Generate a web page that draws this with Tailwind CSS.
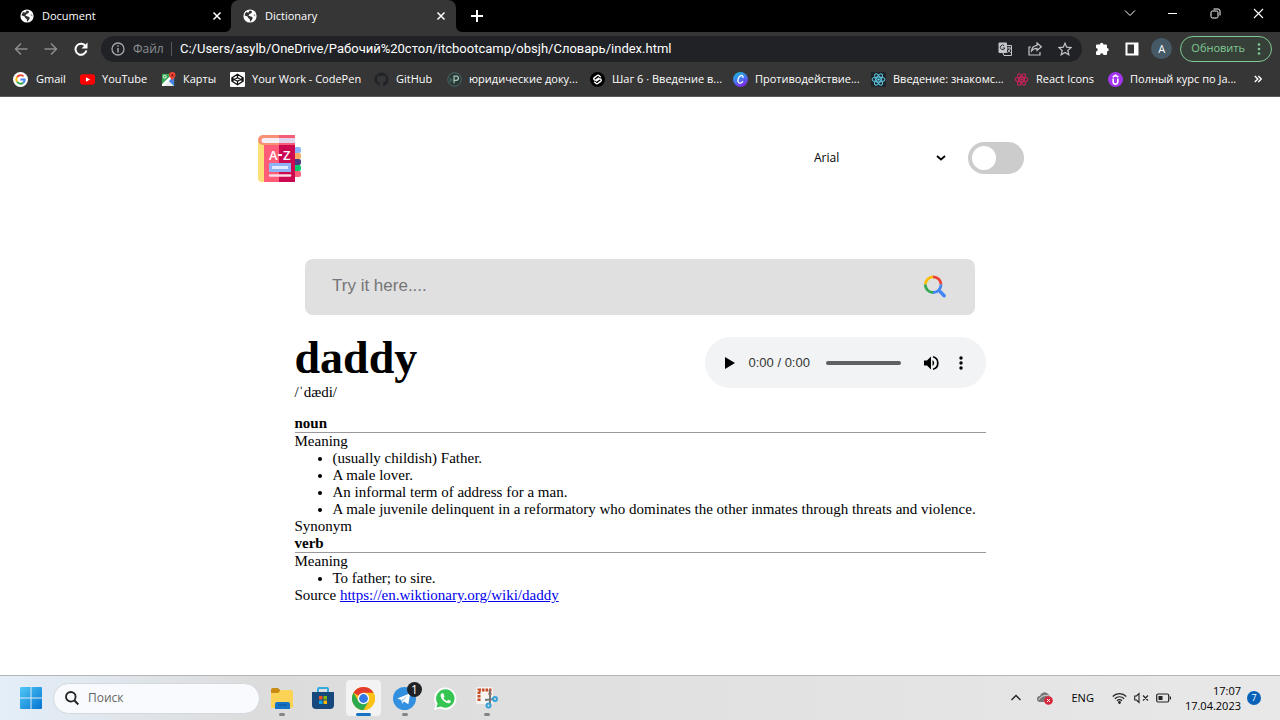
<!DOCTYPE html>
<html lang="ru">

<head>
    <meta charset="UTF-8">
    <meta name="viewport" content="width=device-width, initial-scale=1.0">
    <title>Dictionary</title>
    <script src="https://cdn.jsdelivr.net/npm/@tailwindcss/browser@4"></script>
</head>

<body class="min-h-screen flex flex-col bg-white text-black font-['Open_Sans','Noto_Sans',sans-serif]">
    <svg class="hidden">
        <symbol id="globe" viewBox="0 0 14 14">
            <circle cx="7" cy="7" r="6.6" fill="#fff" />
            <path d="M6.8 1.6 9 2.2 8.6 4 6.6 5 5.4 6.4 7 7.2 9.4 8 9.6 9.8 7.6 12.6 7 12.6 6.8 10.2 5 8.8 4.6 7.6 1.6 6.4 2.4 4 4 2.8 5 4Z" fill="#333" />
            <path d="M10.4 5.4 12.2 5.2 12.4 7.6 11 7Z" fill="#999" />
        </symbol>
        <symbol id="react" viewBox="0 0 16 16">
            <g fill="none" stroke="currentColor" stroke-width="1.1">
                <ellipse cx="8" cy="8" rx="6.8" ry="2.6" />
                <ellipse cx="8" cy="8" rx="6.8" ry="2.6" transform="rotate(60 8 8)" />
                <ellipse cx="8" cy="8" rx="6.8" ry="2.6" transform="rotate(120 8 8)" />
            </g>
            <circle cx="8" cy="8" r="1.4" fill="currentColor" />
        </symbol>
        <symbol id="cross" viewBox="0 0 10 10">
            <path d="m1.5 1.5 7 7m0-7-7 7" fill="none" stroke="currentColor" stroke-width="1.5" />
        </symbol>
        <symbol id="flare" viewBox="0 0 6 6">
            <path d="M6 0v6H0a6 6 0 0 0 6-6Z" fill="#363636" />
        </symbol>
    </svg>

    <!-- Browser -->
    <header class="text-white">
        <!-- Tabs -->
        <div class="flex h-8 bg-black text-[11px]">
            <div class="w-[231px] flex items-center gap-2 pl-5 pr-2">
                <svg class="size-[14px]"><use href="#globe" /></svg>
                <span class="flex-1">Document</span>
                <button aria-label="Close Document" class="p-px"><svg class="size-[10px]"><use href="#cross" /></svg></button>
            </div>
            <div class="relative w-[225px] flex items-center gap-2 pl-3 pr-[9px] bg-[#363636] rounded-t-lg">
                <svg class="absolute bottom-0 -left-[6px] size-[6px]"><use href="#flare" /></svg>
                <svg class="absolute bottom-0 -right-[6px] size-[6px] -scale-x-100"><use href="#flare" /></svg>
                <svg class="size-[14px]"><use href="#globe" /></svg>
                <span class="flex-1">Dictionary</span>
                <button aria-label="Close Dictionary" class="p-px"><svg class="size-[10px]"><use href="#cross" /></svg></button>
            </div>
            <button aria-label="New tab" class="ml-[15px]">
                <svg class="size-3" viewBox="0 0 12 12"><path d="M6 0v12M0 6h12" stroke="#fff" stroke-width="2" /></svg>
            </button>
            <div class="ml-auto flex gap-8 pr-4 pb-[6px]">
                <button aria-label="Search tabs"><svg class="size-3" viewBox="0 0 12 12"><path d="m1 3.500 5 5 5-5" fill="none" stroke="#fff" /></svg></button>
                <button aria-label="Minimize"><svg class="size-[10px]" viewBox="0 0 10 10"><path d="M0 5.500h9" stroke="#fff" /></svg></button>
                <button aria-label="Restore"><svg class="size-[11px]" viewBox="0 0 11 11" fill="none" stroke="#fff"><rect x="1" y="3" width="7" height="7" rx="1.500" /><path d="M3.500 1H8a2 2 0 0 1 2 2v4.500" /></svg></button>
                <button aria-label="Close"><svg class="size-[11px]" viewBox="0 0 11 11"><path d="m1 1 9 9m0-9-9 9" stroke="#fff" stroke-width="1.100" /></svg></button>
            </div>
        </div>

        <!-- Toolbar -->
        <div class="flex items-center h-[33px] bg-[#363636] pl-[14px] pr-2">
            <div class="flex gap-4 w-[87px]">
                <button aria-label="Back"><svg class="size-[14px]" viewBox="0 0 14 14"><path d="M13.500 7H1.500M7 1.500 1.500 7 7 12.500" fill="none" stroke="#8d8d8d" stroke-width="1.500" /></svg></button>
                <button aria-label="Forward"><svg class="size-[14px]" viewBox="0 0 14 14"><path d="M.5 7h12M7 1.500 12.500 7 7 12.500" fill="none" stroke="#8d8d8d" stroke-width="1.500" /></svg></button>
                <button aria-label="Reload"><svg class="size-[14px]" viewBox="0 0 14 14"><path d="M11.800 4.500A5.500 5.500 0 1 0 12.400 8.500" fill="none" stroke="#fff" stroke-width="2" /><path d="M13.500.5v6h-6Z" fill="#fff" /></svg></button>
            </div>
            <div class="flex-1 flex items-center h-[26px] rounded-full bg-[#202226] pl-[10px] pr-[10px] text-xs">
                <svg class="size-[14px]" viewBox="0 0 14 14"><circle cx="7" cy="7" r="6" fill="none" stroke="#a5a8ab" stroke-width="1.300" /><path d="M7 6v4.500M7 3.300v1.500" stroke="#a5a8ab" stroke-width="1.500" /></svg>
                <span class="ml-2 w-[38px] text-[#8d9094]">Файл</span>
                <span class="h-[14px] w-px bg-[#55585c]"></span>
                <input type="text" aria-label="Address" class="flex-1 ml-2 font-['Roboto',sans-serif] text-[13px] outline-none" value="C:/Users/asylb/OneDrive/Рабочий%20стол/itcbootcamp/obsjh/Словарь/index.html">
                <div class="flex gap-4">
                    <button aria-label="Translate">
                        <svg class="size-[14px]" viewBox="0 0 14 14"><rect x=".5" y=".5" width="8.500" height="10.500" rx="1" fill="#c4c7c9" /><path d="M9 3.500h4.500v10H6l-1-2.500" fill="none" stroke="#c4c7c9" /><path d="M6.300 3.800A2.300 2.300 0 1 0 6.800 6H4.800" fill="none" stroke="#333" /><path d="M9 6h4M11 4.700V6M12.300 6q-.5 3-3 4.500M9.700 7.500l3 3.500" fill="none" stroke="#c4c7c9" stroke-width=".9" /></svg>
                    </button>
                    <button aria-label="Share">
                        <svg class="size-[14px]" viewBox="0 0 14 14" fill="none" stroke="#c4c7c9" stroke-width="1.200"><path d="M3 5H1v8h11v-3M9 1l4.300 3.800L9 8.500V6.300Q5.500 6.300 3.500 9 4 4 9 3.400Z" /></svg>
                    </button>
                    <button aria-label="Bookmark">
                        <svg class="size-[14px]" viewBox="0 0 14 14"><path d="m7 1.200 1.700 4 4.400.4-3.300 2.900 1 4.300L7 10.500l-3.800 2.300 1-4.300L.9 5.600l4.400-.4Z" fill="none" stroke="#c4c7c9" stroke-width="1.200" /></svg>
                    </button>
                </div>
            </div>
            <div class="flex items-center gap-4 ml-[13px]">
                <button aria-label="Extensions">
                    <svg class="size-[14px]" viewBox="0 0 14 14"><path d="M5 2.500a1.700 1.700 0 0 1 3.400 0H11a1 1 0 0 1 1 1V6a1.700 1.700 0 0 1 0 3.500V12a1 1 0 0 1-1 1H8.500a1.700 1.700 0 0 0-3.400 0H2a1 1 0 0 1-1-1V9.500a1.700 1.700 0 0 0 0-3.400V3.500a1 1 0 0 1 1-1Z" fill="#fff" /></svg>
                </button>
                <button aria-label="Side panel">
                    <svg class="size-[14px]" viewBox="0 0 14 14"><path d="M.5 .5h13v13H.5Zm2 2v9h6.500v-9Z" fill="#fff" fill-rule="evenodd" /></svg>
                </button>
                <button aria-label="Profile" class="-ml-1 size-[21px] rounded-full bg-[#455a66] text-[11px] leading-[21px]">A</button>
            </div>
            <button class="ml-2 flex items-center gap-3 h-[26px] rounded-full border border-[#81c995] bg-[#364039] pl-[10px] pr-[10px] text-[11px] text-[#81c995]">
                Обновить
                <svg class="w-1 h-3" viewBox="0 0 4 12" fill="#81c995"><circle cx="2" cy="1.500" r="1.300" /><circle cx="2" cy="6" r="1.300" /><circle cx="2" cy="10.500" r="1.300" /></svg>
            </button>
        </div>

        <!-- Bookmarks -->
        <nav class="grid grid-cols-[67px_81px_69px_144px_73px_143px_143px_138px_143px_94px_1fr_auto] items-center h-8 bg-[#363636] border-b border-[#5a5a5a] pl-[13px] pr-[18px] pb-[3px] text-[11px] whitespace-nowrap">
            <a href="#" class="flex items-center gap-2">
                <svg class="size-[15px]" viewBox="0 0 16 16"><circle cx="8" cy="8" r="8" fill="#fff" /><g fill="none" stroke-width="2"><path d="M4.300 5.500A4.500 4.500 0 0 1 11.300 4.700" stroke="#ea4335" /><path d="M4.300 10.500a4.500 4.500 0 0 1 0-5" stroke="#fbbc05" /><path d="M11 11.400a4.500 4.500 0 0 1-6.700-.9" stroke="#34a853" /><path d="M8 8h4.500a4.500 4.500 0 0 1-1.500 3.400" stroke="#4285f4" /></g></svg>
                Gmail
            </a>
            <a href="#" class="flex items-center gap-[7px]">
                <svg class="size-[15px]" viewBox="0 0 16 16"><rect y="2.500" width="16" height="11" rx="3" fill="#f00" /><path d="m6.300 5.500 4.500 2.500-4.500 2.500Z" fill="#fff" /></svg>
                YouTube
            </a>
            <a href="#" class="flex items-center gap-[7px]">
                <svg class="size-[15px]" viewBox="0 0 16 16"><path d="M1 2h13v13H1Z" fill="#34a853" /><path d="m1 15 6.500-6.500L14 15Z" fill="#e8eaed" /><path d="M7.500 8.500 14 2v13Z" fill="#4285f4" /><path d="m1 13 11-11h2v2L3 15H1Z" fill="#fff" /><circle cx="4" cy="5" r="1.500" fill="none" stroke="#fff" /><path d="M12 0a3.500 3.500 0 0 1 3.500 3.500C15.500 6 12.500 6.500 12 10c-.5-3.500-3.500-4-3.500-6.500A3.500 3.500 0 0 1 12 0Z" fill="#ea4335" /><circle cx="12" cy="3.500" r="1.200" fill="#811411" /></svg>
                Карты
            </a>
            <a href="#" class="flex items-center gap-[7px]">
                <svg class="size-[15px]" viewBox="0 0 16 16"><rect width="16" height="16" rx="1" fill="#fff" /><path d="m8 2.500 6 3.800v3.400l-6 3.800-6-3.800V6.300ZM8 2.500v3.800m0 3.400v3.800M2 6.300l6 3.700 6-3.700M2 9.700 8 6l6 3.700" fill="none" stroke="#111" stroke-width="1.300" /></svg>
                Your Work - CodePen
            </a>
            <a href="#" class="flex items-center gap-[7px]">
                <svg class="size-[15px]" viewBox="0 0 16 16"><path fill="#202327" d="M8 .5a7.500 7.500 0 0 0-2.400 14.600c.4.100.5-.2.500-.4v-1.300c-2.100.4-2.600-1-2.600-1-.4-.9-.9-1.100-.9-1.100-.7-.5 0-.5 0-.5.800.1 1.200.8 1.200.8.700 1.200 1.800.8 2.200.6.100-.5.300-.8.500-1-1.700-.2-3.400-.8-3.400-3.700 0-.8.300-1.500.8-2-.1-.2-.3-1 .1-2 0 0 .6-.2 2 .8a7 7 0 0 1 3.800 0c1.400-1 2-.8 2-.8.400 1 .2 1.800.1 2 .5.5.8 1.200.8 2 0 2.900-1.800 3.500-3.500 3.700.3.200.6.700.6 1.400v2.100c0 .2.100.5.500.4A7.500 7.500 0 0 0 8 .5Z" /></svg>
                GitHub
            </a>
            <a href="#" class="flex items-center gap-[7px]">
                <svg class="size-[15px]" viewBox="0 0 16 16" fill="none"><circle cx="8" cy="8" r="7.200" fill="#293836" stroke="#4b6a66" /><path d="M7.500 12V4.500H10a2.200 2.200 0 0 1 0 4.400H7.500" stroke="#a5c8b8" stroke-width="1.300" /><path d="M3.500 6v5m0-2.500h3" stroke="#4b7a70" /></svg>
                юридические доку...
            </a>
            <a href="#" class="flex items-center gap-[7px]">
                <svg class="size-[15px]" viewBox="0 0 16 16"><circle cx="8" cy="8" r="8" fill="#000" /><path d="m11.500 5.500-2-1.800q-.8-.6-1.700 0L4.700 6q-1.400 1.300 0 2.400.8.600 1.700 0l3.300-2.300M4.500 10.500l2 1.800q.8.600 1.700 0l3.100-2.300q1.400-1.300 0-2.400-.8-.6-1.700 0L6.300 9.900" fill="none" stroke="#fff" stroke-width="1.500" /></svg>
                Шаг 6 · Введение в...
            </a>
            <a href="#" class="flex items-center gap-[7px]">
                <svg class="size-[15px]" viewBox="0 0 16 16"><defs><linearGradient id="canva" x1="0" y1="0" x2=".5" y2="1"><stop stop-color="#15c5d4" /><stop offset=".5" stop-color="#3c83ee" /><stop offset="1" stop-color="#7a2be8" /></linearGradient></defs><circle cx="8" cy="8" r="8" fill="url(#canva)" /><path d="M10.300 6.200c1-1.400-.1-2.900-1.800-2.300-2.500.8-4 4.800-2.800 7 .9 1.700 3.600 1.200 4.900-1" fill="none" stroke="#fff" stroke-width="1.400" /></svg>
                Противодействие...
            </a>
            <a href="#" class="flex items-center gap-[7px]">
                <svg class="size-[15px] bg-[#20252a] text-[#5bc5e0]"><use href="#react" /></svg>
                Введение: знакомс...
            </a>
            <a href="#" class="flex items-center gap-[7px]">
                <svg class="size-[15px] text-[#d0215b]"><use href="#react" /></svg>
                React Icons
            </a>
            <a href="#" class="flex items-center gap-[7px]">
                <svg class="size-[15px]" viewBox="0 0 16 16"><circle cx="8" cy="8" r="8" fill="#a435f0" /><path d="M5.500 7v3.500a2.500 2.500 0 0 0 5 0V7M5 5.500l3-2 3 2" fill="none" stroke="#fff" stroke-width="1.700" /></svg>
                Полный курс по Ja...
            </a>
            <button aria-label="More bookmarks">
                <svg class="size-2" viewBox="0 0 8 8"><path d="m.8 1 3 3-3 3M4.300 1l3 3-3 3" fill="none" stroke="#fff" stroke-width="1.400" /></svg>
            </button>
        </nav>
    </header>

    <!-- Dictionary page -->
    <main class="flex-1 px-4 pt-[38px] font-['Liberation_Serif',serif] text-[15px] leading-[17px]">
        <div class="max-w-[768px] mx-auto flex items-center justify-between">
            <svg class="w-12 h-12" viewBox="0 0 48 48">
                <g>
                    <rect x="33" y="12" width="12" height="6" rx="2" fill="#8ab4fb" />
                    <rect x="33" y="18" width="12" height="6" rx="2" fill="#fcab64" />
                    <rect x="33" y="24" width="12" height="6" rx="2" fill="#4b3b85" />
                    <rect x="33" y="30" width="12" height="6" rx="2" fill="#08c870" />
                    <rect x="33" y="36" width="12" height="6" rx="2" fill="#f6607a" />
                </g>
                <path d="M2 5v38q0 4 4 4h4V8Z" fill="#fce077" />
                <path d="M8 9h15v38H8Z" fill="#ff5c78" />
                <path d="M23 9h16v38H23Z" fill="#cc0850" />
                <path d="M23 0H7a5 5 0 0 0 0 10h16Z" fill="#f79175" />
                <path d="M23 0h16v3H23Zm0 7h16v3H23Z" fill="#f75d77" />
                <path d="M23 3H8a2.500 2.500 0 0 0 0 5h15Z" fill="#f5eef7" />
                <path d="M23 3h16v5H23Z" fill="#e1d5ec" />
                <text x="13" y="25" font-family="Open Sans" font-size="13" font-weight="600" fill="#fff">A</text>
                <path d="M22 20h4" stroke="#fff" stroke-width="2" />
                <text x="27" y="25" font-family="Open Sans" font-size="13" font-weight="600" fill="#fff">Z</text>
                <path d="M13 28h22v9H13Z" fill="#8fb2f5" />
                <path d="M16 31h16v3H16Z" fill="#e0ebff" />
                <path d="M14 40.500h20" stroke="#fbd9e5" stroke-width="2.500" stroke-linecap="round" />
            </svg>
            <div class="flex items-center gap-[18px] pb-[2px]">
                <div class="relative">
                    <select aria-label="Font" class="appearance-none w-[140px] h-8 pl-1 font-['Open_Sans',sans-serif] text-xs outline-none">
                        <option>Arial</option>
                        <option>Serif</option>
                        <option>Monospace</option>
                    </select>
                    <svg class="absolute right-1 top-[11px] size-[10px] pointer-events-none" viewBox="0 0 10 10"><path d="m1 3 4 3.500L9 3" fill="none" stroke="#000" stroke-width="1.800" /></svg>
                </div>
                <label class="block w-14 h-8 p-1 rounded-full bg-[#ccc] has-checked:bg-blue-500">
                    <input type="checkbox" aria-label="Dark theme" class="block appearance-none size-6 rounded-full bg-white checked:translate-x-6">
                </label>
            </div>
        </div>

        <form class="max-w-[670px] h-14 mx-auto mt-[76px] flex items-center rounded-lg bg-[#e0e0e0] pl-[27px] pr-7">
            <input type="text" aria-label="Word" placeholder="Try it here...." class="flex-1 font-['Liberation_Sans',sans-serif] text-[17px] pb-[2px] outline-none placeholder:text-[#757575]">
            <button type="button" aria-label="Search">
                <svg class="size-6" viewBox="0 0 24 24" fill="none" stroke-width="2.800">
                    <path d="M2.300 9.500A8 8 0 0 1 10 1.800" stroke="#fbbc05" />
                    <path d="M10 1.800a7.800 7.800 0 0 1 8 7.700" stroke="#ea4335" />
                    <path d="M2.300 9.500a7.800 7.800 0 0 0 7.700 8" stroke="#34a853" />
                    <path d="M18 9.500a7.800 7.800 0 0 1-8 8M15.500 15l3 3" stroke="#4285f4" />
                    <path d="m17.500 17 3.700 3.700" stroke="#4285f4" stroke-width="3.400" stroke-linecap="round" />
                </svg>
            </button>
        </form>

        <div class="max-w-[691px] mx-auto mt-4">
            <div class="flex justify-between">
                <div>
                    <h1 class="text-[46px] leading-[53px] font-bold">daddy</h1>
                    <p>/ˈdædi/</p>
                </div>
                <div class="mt-[6px] flex items-center w-[281px] h-[51px] rounded-full bg-[#f1f3f4] pl-5 pr-[23px] font-['Liberation_Sans',sans-serif] text-[13px]">
                    <button aria-label="Play"><svg class="w-[10px] h-3" viewBox="0 0 10 12"><path d="M0 0v12l10-6Z" /></svg></button>
                    <span class="ml-[14px] text-[#333]">0:00 / 0:00</span>
                    <input type="range" value="0" aria-label="Position" class="ml-4 min-w-0 flex-1 h-1 appearance-none rounded-full bg-[#5f6062] [&::-webkit-slider-thumb]:appearance-none [&::-webkit-slider-thumb]:w-0">
                    <button aria-label="Mute" class="ml-[22px]">
                        <svg class="size-4" viewBox="0 0 16 16"><path d="M1 5.500v5h3l4 4v-13l-4 4Z" /><path d="M9.500 5v6a3.500 3.500 0 0 0 0-6Z" /><path d="M10 1.800a6.400 6.400 0 0 1 0 12.400" fill="none" stroke="#000" stroke-width="1.700" /></svg>
                    </button>
                    <button aria-label="More options" class="ml-5">
                        <svg class="w-1 h-[14px]" viewBox="0 0 4 14"><circle cx="2" cy="2" r="1.700" /><circle cx="2" cy="7" r="1.700" /><circle cx="2" cy="12" r="1.700" /></svg>
                    </button>
                </div>
            </div>

            <section class="mt-[14px]">
                <h2 class="font-bold border-b border-[#999]">noun</h2>
                <p>Meaning</p>
                <ul class="list-disc pl-[38px]">
                    <li>(usually childish) Father.</li>
                    <li>A male lover.</li>
                    <li>An informal term of address for a man.</li>
                    <li>A male juvenile delinquent in a reformatory who dominates the other inmates through threats and violence.</li>
                </ul>
                <p>Synonym</p>
            </section>
            <section>
                <h2 class="font-bold border-b border-[#999]">verb</h2>
                <p>Meaning</p>
                <ul class="list-disc pl-[38px]">
                    <li>To father; to sire.</li>
                </ul>
            </section>
            <p>Source <a href="https://en.wiktionary.org/wiki/daddy" class="text-[#0000ee] underline">https://en.wiktionary.org/wiki/daddy</a></p>
        </div>
    </main>

    <!-- Taskbar -->
    <footer class="flex items-center h-[45px] border-t border-[#b5b5b5] bg-linear-to-r from-[#e3eef9] via-[#dcdcdc] via-20% to-[#e8e8e8] pl-5 pr-[19px] text-[11px]">
        <button aria-label="Start">
            <svg class="size-[22px]" viewBox="0 0 22 22"><defs><linearGradient id="win" x1="0" y1="0" x2="1" y2="1"><stop stop-color="#4fc9f7" /><stop offset="1" stop-color="#0573d1" /></linearGradient></defs><path d="M0 1q0-1 1-1h9.500v10.500H0Zm11.500-1H21q1 0 1 1v9.500H11.500ZM0 11.500h10.500V22H1q-1 0-1-1Zm11.500 0H22V21q0 1-1 1h-9.500Z" fill="url(#win)" /></svg>
        </button>
        <label class="ml-[11px] flex items-center gap-[9px] w-[207px] h-[31px] px-[11px] rounded-full border border-[#d4d9de] bg-[#f8fafd]">
            <svg class="size-[14px]" viewBox="0 0 14 14"><circle cx="5.800" cy="5.800" r="4.800" fill="none" stroke="#222" stroke-width="1.800" /><path d="m9.500 9.500 3.800 4" stroke="#222" stroke-width="2" /></svg>
            <input type="search" aria-label="Поиск" placeholder="Поиск" class="min-w-0 flex-1 text-xs outline-none placeholder:text-[#666]">
        </label>
        <div class="ml-1 flex">
            <button aria-label="Explorer" class="relative w-[35px] h-9 mr-[6px] flex items-center justify-center">
                <svg class="w-[22px] h-[21px]" viewBox="0 0 22 21"><path d="M0 2q0-2 2-2h5l2 2v5H0Z" fill="#c88b13" /><path d="M0 5h7l3-3h10q2 0 2 2v15q0 1-1 1H1q-1 0-1-1Z" fill="#fcd354" /><path d="M4 21v-5q0-2 2-2h11q2 0 2 2v5Z" fill="#1672c4" /><path d="M7 17h9" stroke="#0d528f" /></svg>
                <span class="absolute bottom-0 w-[6px] h-[3px] rounded-full bg-[#858585]"></span>
            </button>
            <button aria-label="Store" class="w-[35px] h-9 mr-[6px] flex items-center justify-center">
                <svg class="size-[22px]" viewBox="0 0 22 22"><path d="M6 6V2q0-1 1-1h8q1 0 1 1v4" fill="none" stroke="#31a9dc" stroke-width="2" /><path d="M0 5h22v13q0 4-4 4H4q-4 0-4-4Z" fill="#17487c" /><path d="M7 9h3.500v3.500H7Z" fill="#f25022" /><path d="M11.500 9H15v3.500h-3.500Z" fill="#7fba00" /><path d="M7 13.500h3.500V17H7Z" fill="#00a4ef" /><path d="M11.500 13.500H15V17h-3.500Z" fill="#ffb900" /></svg>
            </button>
            <button aria-label="Chrome" class="relative w-[35px] h-9 mr-[6px] flex items-center justify-center rounded bg-[#f3f3f3]">
                <svg class="size-[23px]" viewBox="0 0 24 24"><circle cx="12" cy="12" r="12" fill="#fbc116" /><path d="M12 12 1.600 6A12 12 0 0 1 22.400 6Z" fill="#e33b2e" /><path d="M12 6h10.400a12 12 0 0 1-10.400 18l5.200-9Z" fill="#fbc116" /><path d="M1.600 6A12 12 0 0 0 12 24l5.200-9L12 12 6.800 15Z" fill="#2da94f" /><circle cx="12" cy="12" r="6" fill="#fff" /><circle cx="12" cy="12" r="4.600" fill="#3478e5" /></svg>
                <span class="absolute bottom-0 w-[15px] h-[3px] rounded-full bg-[#1672c4]"></span>
            </button>
            <button aria-label="Telegram" class="relative w-[35px] h-9 mr-[6px] flex items-center justify-center">
                <svg class="size-[23px]" viewBox="0 0 24 24"><circle cx="12" cy="12" r="12" fill="#3390e0" /><path d="M4.500 12 18 6.500 16 18l-4.500-3-2 2.500-.8-4Z" fill="#fff" /><path d="m8.800 13.400 7-4.900-5 5.700-1 2.500Z" fill="#b5d4ef" /></svg>
                <span class="absolute top-[2px] right-0 size-[15px] rounded-full bg-[#202124] text-white text-xs leading-[15px]">1</span>
                <span class="absolute bottom-0 w-[6px] h-[3px] rounded-full bg-[#858585]"></span>
            </button>
            <button aria-label="WhatsApp" class="w-[35px] h-9 mr-[6px] flex items-center justify-center">
                <svg class="size-[23px]" viewBox="0 0 24 24"><path d="m0 24 1.700-6A11.600 11.600 0 1 1 6.500 22.500Z" fill="#fff" /><path d="m2.500 21.500 1.300-4.200a9.600 9.600 0 1 1 3.200 3Z" fill="#36c452" /><path d="M8.500 6.500c-1 0-2 1.500-1.500 3.200 1 3.500 4 6.500 7.700 7.300 1.800.2 3-1 3-2.300L15 13.200l-1.500 1.500c-1.800-.7-3-2-3.700-3.500L11 9.800 9.700 6.500Z" fill="#fff" /></svg>
            </button>
            <button aria-label="Snipping tool" class="relative w-[35px] h-9 flex items-center justify-center">
                <svg class="size-[22px]" viewBox="0 0 22 22"><rect width="17" height="17" rx="2" fill="#f7f4f2" /><path d="M3 14V3h11v5" fill="none" stroke="#c64a25" stroke-width="3" stroke-dasharray="2.500 1" /><path d="M14 3v14M9 13l9-1" stroke="#777" stroke-width="2" /><g fill="none" stroke="#36a2d8" stroke-width="2"><circle cx="12.500" cy="18.500" r="2" /><circle cx="19" cy="12" r="2" /></g></svg>
                <span class="absolute bottom-0 w-[6px] h-[3px] rounded-full bg-[#858585]"></span>
            </button>
        </div>
        <div class="ml-auto flex items-center">
            <button aria-label="Hidden icons"><svg class="size-[10px]" viewBox="0 0 10 10"><path d="m.5 7 4.500-4.500L9.500 7" fill="none" stroke="#222" stroke-width="1.300" /></svg></button>
            <svg class="ml-4 w-4 h-[14px]" viewBox="0 0 16 14"><path d="M3 11a3 3 0 0 1 0-6 4.500 4.500 0 0 1 8-2 3 3 0 0 1 1 4L7 11Z" fill="#777" /><path d="M1.500 9Q5 3 12 5" fill="none" stroke="#ddd" /><circle cx="11.500" cy="9.500" r="4.300" fill="#d7263a" /><path d="m10 8 3 3m0-3-3 3" stroke="#fff" /></svg>
            <span class="ml-[18px]">ENG</span>
            <div class="ml-[18px] flex items-center gap-[7px]">
                <svg class="w-[15px] h-3" viewBox="0 0 15 12" fill="none" stroke="#222" stroke-width="1.200"><path d="M.7 4.500a9.700 9.700 0 0 1 13.600 0M2.800 6.700a6.700 6.700 0 0 1 9.400 0M4.900 8.800a3.800 3.800 0 0 1 5.200 0" /><circle cx="7.500" cy="10.500" r=".8" fill="#222" /></svg>
                <svg class="w-[15px] h-3" viewBox="0 0 15 12" fill="none" stroke="#222" stroke-width="1.100"><path d="M5 1.500v9L2.500 8H.7V4h1.800ZM9 3.500l5 5m0-5-5 5" /></svg>
                <svg class="w-[15px] h-3" viewBox="0 0 15 12" fill="none" stroke="#222" stroke-width="1.200"><rect x=".7" y="2" width="12" height="8" rx="1.500" /><path d="M14.400 4.500v3" /><path d="M2.500 4h4v4h-4Z" fill="#222" stroke="none" /></svg>
            </div>
            <time class="ml-[14px] text-right leading-[15px]">17:07<br>17.04.2023</time>
            <span class="ml-[6px] size-[14px] rounded-full bg-[#0863b8] text-white text-[9px] leading-[14px] text-center">7</span>
        </div>
    </footer>
</body>

</html>
